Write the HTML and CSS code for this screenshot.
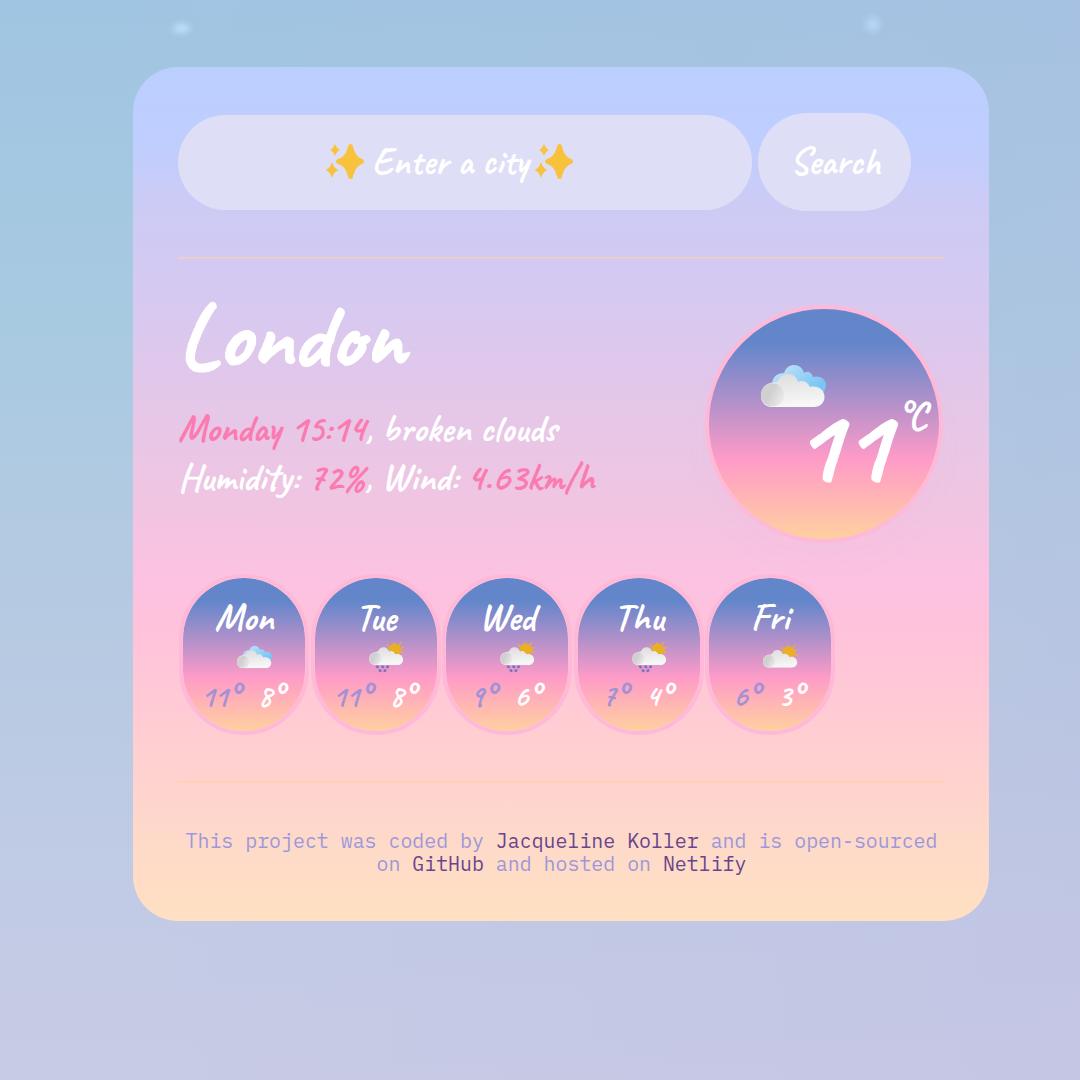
FILE: index.html
```html
<!DOCTYPE html>
<html lang="en">
<head>
<meta charset="utf-8">
<title>Weather</title>
<link rel="stylesheet" href="styles.css">
</head>
<body>
<svg class="defs" width="0" height="0" aria-hidden="true">
  <defs>
    <linearGradient id="white" x1="0" y1="0" x2="0.2" y2="1"><stop offset="0" stop-color="#dcdcdc"/><stop offset="1" stop-color="#f7f7f7"/></linearGradient>
    <linearGradient id="puff" x1="0" y1="0" x2="1" y2="0.5"><stop offset="0" stop-color="#d0d0d0"/><stop offset="0.5" stop-color="#d0d0d0"/><stop offset="1" stop-color="#e8e8e8"/></linearGradient>
    <linearGradient id="sky" x1="0" y1="0" x2="1" y2="0.6"><stop offset="0" stop-color="#c6e6fb"/><stop offset="1" stop-color="#79c5f4"/></linearGradient>
    <symbol id="cloud" viewBox="0 0 65 42">
      <path fill="url(#white)" d="M11 42C4 42 0 37 0 30.500C0 23 5 18 12 17.500C14 17 16 17 17 16C19 11 23 8.500 27.500 9C32 9 35.500 12 37 17C40 15 45 16 47 19C48 20 48 21 49 22C57 20 63.500 25 63.500 32C63.500 38 59 42 53 42Z"/>
      <circle fill="url(#puff)" cx="11.500" cy="30" r="11.500"/>
    </symbol>
    <symbol id="broken" viewBox="0 0 65 42">
      <path fill="url(#sky)" d="M11 20C11 12 16 8 23 8C25 2 29 0 33 0C38 0 42 3 43 8C47 5 51 8 52 12C59 10 65 14 65 20C65 22 64 24 63 27H18Z"/>
      <use href="#cloud" width="65" height="42"/>
    </symbol>
    <symbol id="few" viewBox="0 0 65 48">
      <g stroke="#eeb12f" stroke-width="2.200" stroke-linecap="round"><path d="M46 4V1M37 8L34 5M55 7L59 1M59 12L64 10M60 18L64 20"/></g>
      <circle cx="48" cy="15" r="12" fill="#e9af25"/>
      <use href="#cloud" y="1" width="65" height="42"/>
    </symbol>
    <symbol id="rain" viewBox="0 0 65 58">
      <use href="#few" width="65" height="48"/>
      <g stroke="#7474bd" stroke-width="5" stroke-linecap="round"><path d="M15 46l1 1M25 46l1 1M35 46l-1 1M20 53l1 1M30 53l-1 1"/></g>
    </symbol>
    <symbol id="sparkles" viewBox="0 0 38 36">
      <g fill="#f9c23c"><path d="M22.500 1Q24.500 -1 26.500 1C29 10 31 13 37 15.500Q39 17.500 37 19.500C31 22 29 25 26.500 34Q24.500 36 22.500 34C20 25 18 22 11 19.500Q9 17.500 11 15.500C18 13 20 10 22.500 1Z"/><path d="M9 0Q11 5 14 6Q11 7 9 12Q7 7 4 6Q7 5 9 0Z"/><path d="M6 18Q8 25 13 26Q8 27 6 34Q4 27 -1 26Q4 25 6 18Z"/></g>
    </symbol>
  </defs>
</svg>
<i class="star star-left"></i><i class="star star-right"></i>
<main class="card">
  <form class="search">
    <div class="field"><svg class="sparkle"><use href="#sparkles"/></svg><span class="hint">Enter a city</span><svg class="sparkle"><use href="#sparkles"/></svg></div>
    <button class="submit" type="button">Search</button>
  </form>
  <section class="current">
    <div class="summary">
      <h1 class="city">London</h1>
      <p class="line"><b class="when">Monday 15:14</b><span class="desc">, broken clouds</span></p>
      <p class="line"><span class="label">Humidity: </span><b class="humidity">72%</b><span class="label">, Wind: </span><b class="wind">4.63km/h</b></p>
    </div>
    <div class="now">
      <svg class="now-icon"><use href="#broken"/></svg>
      <div class="now-temp"><span class="degrees">11</span><span class="unit">°C</span></div>
    </div>
  </section>
  <section class="forecast">
    <div class="day"><span class="name">Mon</span><svg class="icon"><use href="#broken"/></svg><div class="temps"><span class="max">11<sup>°</sup></span><span class="min">8<sup>°</sup></span></div></div>
    <div class="day"><span class="name">Tue</span><svg class="icon icon-rain"><use href="#rain"/></svg><div class="temps"><span class="max">11<sup>°</sup></span><span class="min">8<sup>°</sup></span></div></div>
    <div class="day"><span class="name">Wed</span><svg class="icon icon-rain"><use href="#rain"/></svg><div class="temps"><span class="max">9<sup>°</sup></span><span class="min">6<sup>°</sup></span></div></div>
    <div class="day"><span class="name">Thu</span><svg class="icon icon-rain"><use href="#rain"/></svg><div class="temps"><span class="max">7<sup>°</sup></span><span class="min">4<sup>°</sup></span></div></div>
    <div class="day"><span class="name">Fri</span><svg class="icon icon-few"><use href="#few"/></svg><div class="temps"><span class="max">6<sup>°</sup></span><span class="min">3<sup>°</sup></span></div></div>
  </section>
  <footer class="credits">This project was coded by <a>Jacqueline Koller</a> and is open-sourced<br>on <a>GitHub</a> and hosted on <a>Netlify</a></footer>
</main>
</body>
</html>
```
FILE: styles.css
```css
* { box-sizing: border-box; }
body {
  margin: 0;
  height: 1080px;
  overflow: hidden;
  padding: 67px 91px 0 133px;
  font-family: "Caveat", "Lato", cursive;
  font-weight: 600;
  color: #fff;
  background:
    linear-gradient(90deg, rgba(176, 176, 224, 0) 10%, rgba(186, 180, 224, .22) 100%),
    linear-gradient(180deg, #a0c5e2 0%, #a8cae1 30%, #b5cae2 55%, #c1cbe5 82%, #c8cbe5 100%);
}
.defs { position: absolute; }
.star {
  position: absolute;
  border-radius: 50%;
  background: #bfe1fc;
  filter: blur(3px);
}
.star-left { left: 173px; top: 24px; width: 17px; height: 9px; }
.star-right { left: 866px; top: 17px; width: 14px; height: 15px; background: #b5d5f7; }
.card {
  height: 854px;
  padding: 46px 45px 0 46px;
  border-radius: 45px;
  background: linear-gradient(180deg, #bbcfff 0%, #bfcefe 9%, #cdcbf4 17%, #d6c9f1 27%, #e5c7e8 40%, #f0c5e2 51%, #fcc2e1 60%, #ffc2db 66%, #ffcfd1 80%, #fed9ca 90%, #ffe0c2 100%);
}
.search {
  display: flex;
  align-items: center;
  gap: 6px;
  height: 98px;
}
.field, .submit {
  display: flex;
  align-items: center;
  justify-content: center;
  border: 0;
  border-radius: 49px;
  background: #dedef6;
  color: #fff;
}
.field { width: 574px; height: 95px; margin-left: -1px; padding: 0 31px 1px 0; }
.sparkle { width: 38px; height: 36px; overflow: visible; }
.hint { width: 160px; margin: 0 3px 0 8px; font-size: 37.7px; white-space: nowrap; }
.submit { width: 153px; height: 98px; padding: 0 0 1px 1px; font: inherit; font-size: 37.7px; }
.current {
  display: flex;
  justify-content: space-between;
  height: 317px;
  margin: 46px 0 0 -1px;
  padding: 46px 0 0 1px;
  border-top: 2px solid #f0cdc8;
}
.city { margin: -10px 0 0 -1px; height: 82px; font-size: 92px; line-height: 82px; font-weight: 700; -webkit-text-stroke: 1px #fff; }
.line { display: flex; margin: 0 0 0 -1px; height: 49px; font-size: 38px; line-height: 49px; white-space: pre; }
.city + .line { margin-top: 27px; }
.line b { color: #fb7bb1; font-weight: 700; }
.now {
  width: 238px;
  height: 238px;
  margin-right: 1px;
  padding: 56px 0 0 52px;
  border: 4px solid #ffb9d8;
  border-radius: 50%;
  background: linear-gradient(180deg, #6386cb 0 15%, #fe9bc8 65%, #ffd09f 100%);
  box-shadow: 0 20px 40px rgba(200, 140, 200, .02);
}
.now-icon { display: block; width: 65px; height: 42px; }
.now-temp { display: flex; margin: -21px 0 0 31px; height: 100px; }
.degrees { width: 102px; font-size: 106px; line-height: 119px; font-weight: 700; letter-spacing: 1px; -webkit-text-stroke: 1px #fff; }
.unit { font-size: 39px; line-height: 62px; font-weight: 700; margin-left: 3px; }
.forecast { display: flex; gap: 1.5px; margin-left: -1px; padding: 0 0 46px 1px; border-bottom: 2px solid #ffd0b2; }
.day {
  width: 130px;
  height: 161px;
  padding-top: 20px;
  border: 4px solid #ffb9d8;
  border-radius: 65px;
  background: linear-gradient(180deg, #6386cb 0 15%, #fe9bc8 65%, #ffd09f 100%) padding-box;
  display: flex;
  flex-direction: column;
  align-items: center;
}
.name { height: 40px; font-size: 38px; line-height: 40px; }
.icon { width: 35px; height: 24px; margin: 7px 0 0 21px; }
.icon-rain { height: 31px; margin-top: 4px; margin-bottom: -4px; }
.icon-few { height: 27px; margin-top: 6px; margin-bottom: -2px; }
.temps { display: flex; gap: 21px; margin-top: 10px; font-size: 30px; line-height: 34px; margin-left: -6px; }
.max { color: #a391d5; }
sup { font-size: 34px; line-height: 0; vertical-align: -2px; }
.credits {
  margin-top: 46px;
  font: normal 19.9px/23px "IBM Plex Mono", "Liberation Mono", monospace;
  text-align: center;
  white-space: nowrap;
  color: #9c98d9;
}
.credits a { color: #68448e; }
```
